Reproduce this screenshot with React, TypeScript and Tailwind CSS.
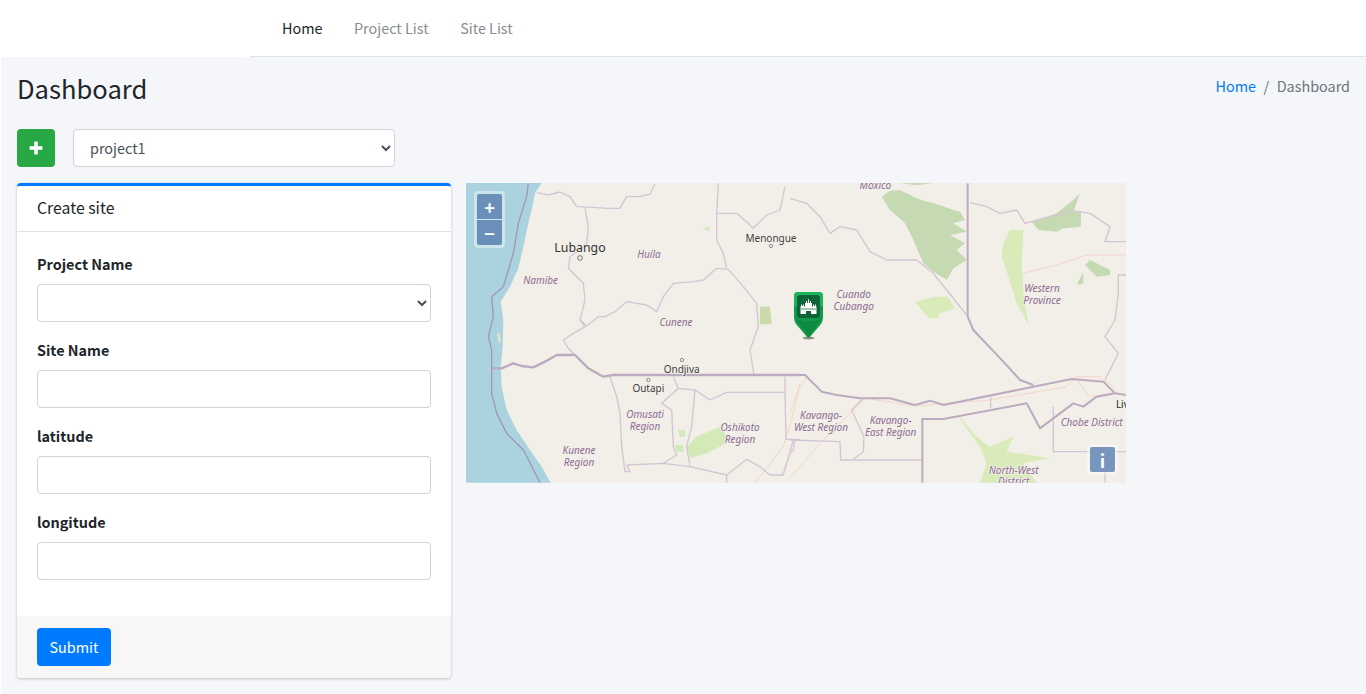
const FONT = '"Noto Sans CJK SC","Noto Sans",sans-serif';

const thin2 = [
  "230,38 265,45 300,36 330,50 350,80 400,82 440,85 480,85 500,50 540,50 570,42 585,12",
  "375,85 385,140 380,190 350,215 330,230 325,265 350,290 370,310 375,360 360,420 375,440 340,460 310,480 325,505 345,525",
  "360,420 380,438 415,410 435,410 465,395 500,365 560,375 590,395 610,350 640,310 700,305 730,300 770,265 805,268 850,320 890,370 895,440 870,510 882,585",
  "775,10 770,100 770,180 790,220 800,265",
  "770,100 830,100 860,125 880,145 920,105 960,90 975,20",
  "450,590 470,650 480,700 485,800 495,875 510,875 500,855 610,850 690,860 800,885 800,908",
  "640,590 655,625 705,630 750,660 800,637 975,637 975,590",
  "655,625 605,670 635,690 640,800 650,825 610,850",
  "705,630 695,740 680,800 690,860",
  "800,885 860,838 900,860 930,885 970,885 1000,780",
  "975,637 978,778 1020,778",
];
const thin3 = [
  "0,55 50,70 90,110 120,160 150,140 200,150 240,215 290,240 380,240 430,280 470,330 530,405",
  "540,68 590,80 630,100 680,90 705,130 780,110 850,92 900,100 960,140 945,185 1008,185",
  "1008,285 985,285 985,340 975,420 945,470 985,520 945,600",
  "0,780 150,785 152,840 395,840",
  "220,655 185,690 222,770 220,815 190,838",
  "15,780 10,810 0,815",
  "602,650 602,685",
  "790,680 790,815 1008,815",
  "945,815 945,908",
];
const road3 = [
  "695,282 800,255 890,225 1008,225",
  "0,700 20,640 50,590",
  "0,895 90,790 220,660",
  "225,655 375,678 600,660 830,620 860,590 930,590 975,625",
  "860,600 900,650 975,640",
];
const road2 = ["885,908 970,800 1000,700 1020,610", "965,880 1000,810"];

function Label({ x, y, children, place = false, size = 30, color }: { x: number; y: number; children: string; place?: boolean; size?: number; color?: string }) {
  return (
    <text
      x={x}
      y={y}
      textAnchor="middle"
      fontSize={size}
      fontStyle={place ? "normal" : "italic"}
      fill={color ?? (place ? "#3f3f3f" : "#8d6c93")}
      stroke="#f2efe9"
      strokeWidth={5}
      paintOrder="stroke"
      fontFamily='"Noto Sans",sans-serif'
    >
      {children}
    </text>
  );
}

function MapArt() {
  return (
    <svg viewBox="0 0 660 300" width={660} height={300} className="block">
      <rect width={660} height={300} fill="#f2efe9" />
      <g transform="translate(-6,-3) scale(0.33333)" fill="none" strokeLinejoin="round">
        <polygon
          fill="#aad3df"
          points="18,9 245,9 225,40 215,90 205,130 190,200 175,265 150,320 122,365 130,420 128,500 122,560 125,620 140,690 170,750 210,810 245,860 272,908 18,908"
        />
        <polygon fill="#f2e9c4" points="112,460 118,458 122,490 116,484" />
        <polygon fill="#d3e9b8" points="680,800 710,770 780,740 800,770 800,790 740,820 690,835" />
        <polygon fill="#c9d9a9" points="900,380 930,380 935,433 900,433" />
        <polygon fill="#d3e9b8" points="730,145 748,140 746,155" />
        <polygon fill="#d3e9b8" points="655,750 675,750 675,770 660,770" />
        <polygon fill="#d3e9b8" points="645,795 670,795 670,815 650,815" />
        {road2.map((p) => (
          <polyline key={p} points={p} stroke="#f6cfc0" strokeWidth={2.5} />
        ))}
        {thin2.map((p) => (
          <polyline key={p} points={p} stroke="#d3c5d3" strokeWidth={4} />
        ))}
        <polyline
          points="205,10 200,50 175,130 160,220 130,320 95,350 100,410 85,470 95,510 95,640 110,700 140,760 190,810 240,908"
          stroke="#a397b5"
          strokeWidth={4}
        />
        <polyline points="95,565 125,565 160,550 185,558 220,562 255,545 290,525 345,525 385,565 430,590 460,585 1020,585" stroke="#bcaabf" strokeWidth={7} />
        <Label x={360} y={217} place size={37} color="#333333">Lubango</Label>
        <circle cx={360} cy={234} r={7} fill="#f2efe9" stroke="#777" strokeWidth={3} />
        <Label x={567} y={234}>Huíla</Label>
        <Label x={242} y={312}>Namibe</Label>
        <Label x={648} y={439}>Cunene</Label>
        <Label x={933} y={185} place>Menongue</Label>
        <circle cx={933} cy={198} r={5} fill="#f2efe9" stroke="#777" strokeWidth={2.5} />
        <circle cx={666} cy={540} r={5} fill="#f2efe9" stroke="#777" strokeWidth={2.5} />
        <Label x={665} y={579} place>Ondjiva</Label>
        <circle cx={565} cy={600} r={5} fill="#f2efe9" stroke="#777" strokeWidth={2.5} />
        <Label x={565} y={636} place>Outapi</Label>
        <Label x={555} y={714}>Omusati</Label>
        <Label x={555} y={750}>Region</Label>
        <Label x={840} y={754}>Oshikoto</Label>
        <Label x={840} y={790}>Region</Label>
        <Label x={357} y={821}>Kunene</Label>
        <Label x={357} y={858}>Region</Label>
      </g>
      <g transform="translate(324,-3) scale(0.33333)" fill="none" strokeLinejoin="round">
        <polygon fill="#c5dab3" points="275,50 300,32 330,30 380,55 400,62 440,72 475,85 510,95 525,120 490,130 530,155 480,165 525,190 500,210 530,240 490,265 470,300 430,275 400,250 370,180 345,130 300,90" />
        <polygon fill="#c5dab3" points="330,9 430,9 380,16" />
        <polygon fill="#d8ebb8" points="640,190 660,150 700,150 695,250 700,340 715,435 680,370 655,290 635,230" />
        <polygon fill="#c5dab3" points="725,125 800,100 850,60 870,40 850,95 873,95 873,140 820,145 800,155 745,150" />
        <polygon fill="#c5dab3" points="885,255 900,240 960,270 960,285 920,290" />
        <polygon fill="#c5dab3" points="860,315 880,275 880,310" />
        <polygon fill="#d8ebb8" points="375,365 435,350 475,350 495,385 450,400 445,415 420,415 400,395" />
        <polygon fill="#d8ebb8" points="490,690 560,770 600,800 670,770 650,815 780,835 700,850 740,908 570,908 590,850 570,800" />
        {road3.map((p) => (
          <polyline key={p} points={p} stroke="#f6cfc0" strokeWidth={2.5} />
        ))}
        {thin3.map((p) => (
          <polyline key={p} points={p} stroke="#d3c5d3" strokeWidth={4} />
        ))}
        <polyline points="533,10 533,410 550,450 640,545 690,600 730,615" stroke="#bcaabf" strokeWidth={6} />
        <polyline points="0,585 45,585 95,635 140,645 210,655 300,655 375,675 420,662 460,675 845,597 940,605 975,640 1008,645" stroke="#bcaabf" strokeWidth={6} />
        <polyline points="397,908 397,717 460,717 710,670 750,745 850,670 880,680 920,650 975,640" stroke="#bcaabf" strokeWidth={6} />
        <Label x={256} y={26}>Moxico</Label>
        <Label x={191} y={353}>Cuando</Label>
        <Label x={191} y={390}>Cubango</Label>
        <Label x={756} y={335}>Western</Label>
        <Label x={756} y={371}>Province</Label>
        <Label x={93} y={717}>Kavango-</Label>
        <Label x={93} y={753}>West Region</Label>
        <Label x={302} y={732}>Kavango-</Label>
        <Label x={302} y={768}>East Region</Label>
        <Label x={905} y={739}>Chobe District</Label>
        <Label x={671} y={881}>North-West</Label>
        <Label x={671} y={915}>District</Label>
        <Label x={997} y={685} place color="#222222">Liv</Label>
      </g>
      <g transform="translate(328,109)">
        <ellipse cx={14.500} cy={46} rx={6} ry={1.500} fill="#6b6b55" opacity={0.7} />
        <path d="M4 0H25Q29 0 29 4V25Q29 29 27 32L15.500 45.500Q14.500 46.500 13.500 45.500L2 32Q0 29 0 25V4Q0 0 4 0Z" fill="#129a4a" />
        <path d="M4 0H25Q29 0 29 4V14H0V4Q0 0 4 0Z" fill="#1cb45c" />
        <path d="M2 27Q14.500 32 27 27L14.500 45Z" fill="#0f8a42" />
        <rect x={3} y={3} width={23} height={23} rx={3} fill="#0d6537" />
        <path
          d="M6.500 22V14.500H7V12.500H8V14H9V12.500H10V14.500H11V11H12V9H13V11H14V7.500L14.500 7L15 7.500V11H16V9H17V11H18V14.500H19V12.500H20V14H21V12.500H22V14.500H22.500V22H17V19H12V22Z"
          fill="#ffffff"
        />
        <path d="M7 17H22" stroke="#0d6537" strokeWidth={0.7} />
      </g>
    </svg>
  );
}

const inputCls = "block w-full h-[38px] rounded-[4px] border border-[#ced4da] bg-white px-3 text-[14.400px] text-[#495057]";

function Field({ label, select }: { label: string; select?: boolean }) {
  return (
    <div className="mb-[16px]">
      <label className="mb-2 block text-[14.400px] leading-[24px] font-bold text-[#212529]">{label}</label>
      {select ? (
        <select className={inputCls + " appearance-auto"}>
          <option></option>
        </select>
      ) : (
        <input className={inputCls} type="text" />
      )}
    </div>
  );
}

export default function App() {
  return (
    <div className="h-[694px] overflow-hidden bg-white text-[14.400px] leading-[24px] text-[#212529]" style={{ fontFamily: FONT }}>
      <header className="flex h-[57px]">
        <div className="w-[250px] bg-white" />
        <nav className="flex flex-1 items-center gap-[31.500px] border-b border-[#dee2e6] bg-white pl-8 pb-[1px]">
          <a className="text-[#212529]">Home</a>
          <a className="text-[#8a8d91]">Project List</a>
          <a className="text-[#8a8d91]">Site List</a>
        </nav>
      </header>
      <main className="ml-px h-[637px] bg-[#f4f6f9] px-4 pt-[14px]">
        <div className="mb-[24px] flex h-[34px] items-center justify-between">
          <h1 className="text-[25.600px] leading-[34px] font-normal text-[#212529]">Dashboard</h1>
          <ol className="-mt-[5px] flex items-center">
            <li className="text-[#007bff]">Home</li>
            <li className="px-[7.500px] text-[#6c757d]">/</li>
            <li className="text-[#6c757d]">Dashboard</li>
          </ol>
        </div>
        <div className="mb-4 flex items-center gap-[18px]">
          <button className="flex h-[38px] w-[38px] items-center justify-center rounded-[4px] bg-[#28a745]">
            <svg viewBox="0 0 14 14" width={14} height={14}>
              <path d="M5.200 1.200Q5.200 .5 5.900 .5H8.100Q8.800 .5 8.800 1.200V5.200H12.800Q13.500 5.200 13.500 5.900V8.100Q13.500 8.800 12.800 8.800H8.800V12.800Q8.800 13.500 8.100 13.500H5.900Q5.200 13.500 5.200 12.800V8.800H1.200Q.5 8.800 .5 8.100V5.900Q.5 5.200 1.200 5.200H5.200Z" fill="#fff" />
            </svg>
          </button>
          <select className="h-[38px] w-[322px] appearance-auto rounded-[4px] border border-[#ced4da] bg-white pl-3 pr-2 pb-[2px] text-[14.400px] text-[#495057]">
            <option>project1</option>
          </select>
        </div>
        <div className="flex items-start gap-[15px]">
          <section className="w-[434px] overflow-hidden rounded-[4px] border-t-[3px] border-[#007bff] bg-white shadow-[0_0_1px_rgba(0,0,0,0.125),0_1px_3px_rgba(0,0,0,0.2)]">
            <div className="flex h-[46px] items-center border-b border-[#dee2e6] px-5 pb-[2px] text-[15.800px] leading-[24px]">Create site</div>
            <div className="h-[384px] px-5 pt-[20px]">
              <Field label="Project Name" select />
              <Field label="Site Name" />
              <Field label="latitude" />
              <Field label="longitude" />
            </div>
            <div className="h-[62px] bg-[#f7f7f7] px-5 pt-3">
              <button className="h-[38px] w-[74px] rounded-[4px] bg-[#007bff] text-[14.400px] text-white">Submit</button>
            </div>
          </section>
          <div className="relative h-[300px] w-[660px] overflow-hidden">
            <MapArt />
            <div className="absolute top-2 left-2 flex flex-col gap-px rounded-[4px] bg-white/40 p-[3px]">
              <button className="flex h-[25px] w-[25px] items-center justify-center rounded-t-[2px] bg-[#6a8fb9] text-[18px] font-bold text-white">+</button>
              <button className="flex h-[25px] w-[25px] items-center justify-center rounded-b-[2px] bg-[#6a8fb9] text-[18px] font-bold text-white">−</button>
            </div>
            <div className="absolute right-2 bottom-2 rounded-[4px] bg-white/40 p-[3px]">
              <button className="flex h-[25px] w-[25px] items-center justify-center rounded-[2px] bg-[#7896bd] text-[18px] font-bold text-white">i</button>
            </div>
          </div>
        </div>
      </main>
    </div>
  );
}
